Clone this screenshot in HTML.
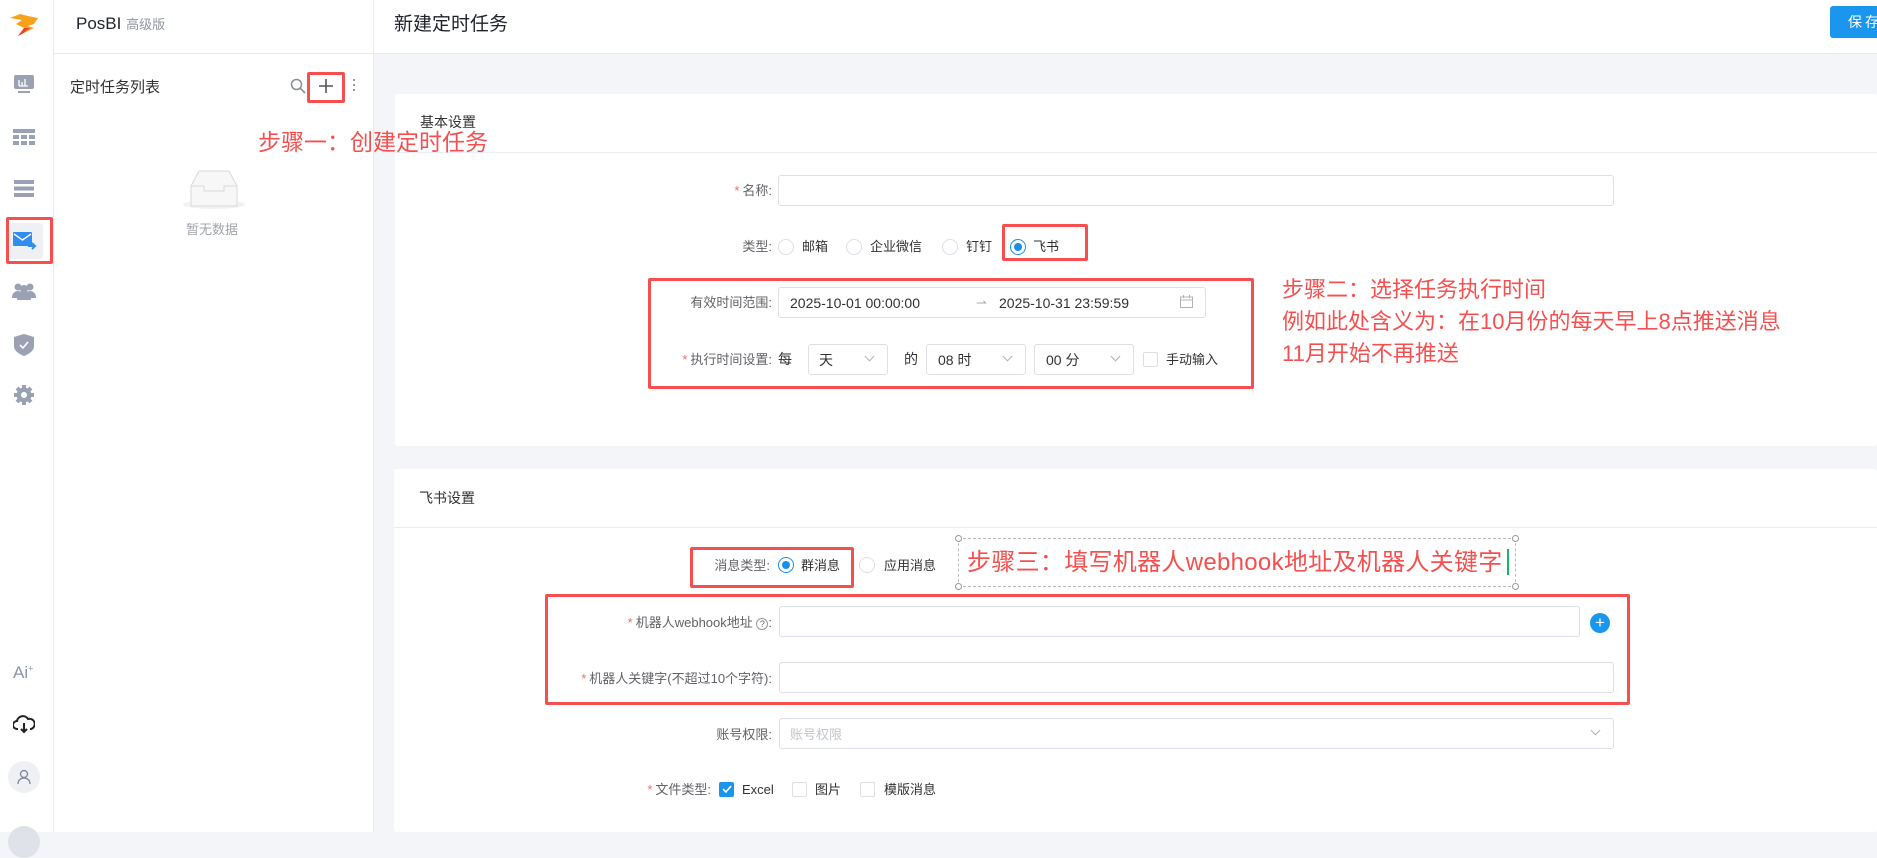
<!DOCTYPE html>
<html><head><meta charset="utf-8"><style>
*{margin:0;padding:0;box-sizing:border-box}
body{width:1877px;height:832px;overflow:hidden;position:relative;font-family:"Liberation Sans","Noto Sans CJK SC",sans-serif;background:#f3f5f8;color:#303133}
.a{position:absolute}
.lbl{position:absolute;font-size:13px;line-height:16px;color:#606266;text-align:right;white-space:nowrap}
.req{color:#f56c6c;margin-right:3px}
.inp{position:absolute;border:1px solid #dcdfe6;border-radius:3px;background:#fff}
.red{position:absolute;border:3px solid #f5504f;border-radius:2px;z-index:5}
.rt{position:absolute;color:#f5504f;white-space:nowrap;z-index:5}
.radio{position:absolute;width:16px;height:16px;border:1px solid #dcdfe6;border-radius:50%;background:#fff}
.radio.on{border-color:#1890e8}
.radio.on:after{content:"";position:absolute;left:3px;top:3px;width:8px;height:8px;border-radius:50%;background:#1890e8}
.t{position:absolute;font-size:13px;line-height:16px;color:#303133;white-space:nowrap}
.chev{position:absolute;width:7px;height:7px;border-right:1px solid #b0b3b9;border-bottom:1px solid #b0b3b9;transform:rotate(45deg)}
.cb{position:absolute;width:15px;height:15px;border:1px solid #dcdfe6;border-radius:2px;background:#fff}
</style></head><body>
<!-- sidebar -->
<div class="a" style="left:0;top:0;width:54px;height:832px;background:#fff;border-right:1px solid #e8eaee"></div>
<svg class="a" style="left:8px;top:12px" width="32" height="26" viewBox="0 0 32 26"><path d="M2 6 L12 2 L20 4 L30 6 L26 12 L20 14 L26 16 L10 24 L16 16 L8 12 L14 8 Z" fill="#f7a21b"/><path d="M10 24 L16 16 L22 16 L14 22Z" fill="#e9422e"/></svg>
<svg class="a" style="left:13px;top:74px" width="22" height="20" viewBox="0 0 22 20"><rect x="1" y="1" width="20" height="14" rx="2" fill="#9aa1b3"/><rect x="5" y="17" width="12" height="2" fill="#9aa1b3"/><path d="M6 12V6M9 12V8M12 12V5M15 12h-9" stroke="#fff" stroke-width="1.3"/></svg>
<svg class="a" style="left:13px;top:129px" width="22" height="16"><g fill="#9aa1b3"><rect x="0" y="0" width="22" height="4"/><rect x="0" y="6" width="6" height="4"/><rect x="8" y="6" width="6" height="4"/><rect x="16" y="6" width="6" height="4"/><rect x="0" y="12" width="6" height="4"/><rect x="8" y="12" width="6" height="4"/><rect x="16" y="12" width="6" height="4"/></g></svg>
<svg class="a" style="left:14px;top:180px" width="20" height="17"><g fill="#9aa1b3"><rect y="0" width="20" height="4"/><rect y="6.5" width="20" height="4"/><rect y="13" width="20" height="4"/></g></svg>
<div class="a" style="left:9px;top:223px;width:34px;height:36px;background:#eef0f4;border-radius:4px"></div>
<svg class="a" style="left:13px;top:231px" width="24" height="20"><rect x="0" y="1" width="19" height="14" rx="1" fill="#2f8df0"/><path d="M1 3 L9.5 9 L18 3" stroke="#fff" stroke-width="1.5" fill="none"/><path d="M15 15h7M19 12l3 3-3 3" stroke="#2f8df0" stroke-width="2" fill="none"/></svg>
<div class="red" style="left:6px;top:217px;width:47px;height:47px"></div>
<svg class="a" style="left:12px;top:282px" width="24" height="18"><g fill="#9aa1b3"><circle cx="6" cy="5" r="3.5"/><circle cx="18" cy="5" r="3.5"/><circle cx="12" cy="7" r="4"/><path d="M0 16c0-5 3-7 6-7s6 2 6 7z"/><path d="M12 16c0-5 3-7 6-7s6 2 6 7z"/><path d="M5 18c0-6 3-8 7-8s7 2 7 8z"/></g></svg>
<svg class="a" style="left:14px;top:334px" width="20" height="22"><path d="M10 0L20 3V12C20 17 15 20 10 22C5 20 0 17 0 12V3Z" fill="#9aa1b3"/><path d="M6 11l3 3 5-6" stroke="#fff" stroke-width="1.6" fill="none"/></svg>
<svg class="a" style="left:13px;top:384px" width="22" height="22" viewBox="0 0 22 22"><circle cx="11" cy="11" r="7.5" fill="#9aa1b3"/><g stroke="#9aa1b3" stroke-width="4"><path d="M11 1v20M1 11h20M4 4l14 14M18 4L4 18"/></g><circle cx="11" cy="11" r="3" fill="#fff"/></svg>
<div class="a" style="left:13px;top:663px;font-size:17px;color:#8a93a8">Ai<sup style="font-size:9px">+</sup></div>
<svg class="a" style="left:13px;top:714px" width="22" height="20"><path d="M5 15H4a4 4 0 0 1 0-8 6 6 0 0 1 11-2 5 5 0 0 1 3 10h-1" stroke="#222" stroke-width="2" fill="none"/><path d="M11 9v9M8 15l3 3 3-3" stroke="#222" stroke-width="2" fill="none"/></svg>
<div class="a" style="left:8px;top:761px;width:32px;height:32px;border-radius:50%;background:#eef0f4"></div>
<svg class="a" style="left:17px;top:769px" width="14" height="16"><circle cx="7" cy="5" r="3.5" stroke="#7d8497" stroke-width="1.3" fill="none"/><path d="M1 15c0-4 3-6 6-6s6 2 6 6" stroke="#7d8497" stroke-width="1.3" fill="none"/></svg>
<div class="a" style="left:8px;top:826px;width:32px;height:32px;border-radius:50%;background:#dfe2e8"></div>

<!-- middle panel -->
<div class="a" style="left:54px;top:0;width:320px;height:832px;background:#fff;border-right:1px solid #e8eaee"></div>
<div class="a" style="left:374px;top:0;width:1503px;height:53px;background:#fff"></div>
<div class="a" style="left:54px;top:53px;width:1823px;height:1px;background:#e8eaee"></div>
<div class="t" style="left:76px;top:14px;font-size:17px;line-height:20px;color:#1f2329">PosBI <span style="font-size:13px;color:#8f959e">高级版</span></div>
<div class="t" style="left:394px;top:13px;font-size:19px;line-height:24px;color:#1f2329">新建定时任务</div>
<div class="t" style="left:70px;top:79px;font-size:15px;line-height:18px">定时任务列表</div>
<svg class="a" style="left:290px;top:78px" width="16" height="16"><circle cx="6.5" cy="6.5" r="5" stroke="#8a8f99" stroke-width="1.5" fill="none"/><path d="M10 10l5 5" stroke="#8a8f99" stroke-width="1.6"/></svg>
<svg class="a" style="left:318px;top:78px" width="16" height="16"><path d="M8 1v14M1 8h14" stroke="#555" stroke-width="1.6"/></svg>
<div class="red" style="left:307px;top:72px;width:38px;height:31px"></div>
<div class="a" style="left:353px;top:79px;width:2px;height:2px;background:#999;box-shadow:0 5px #999,0 10px #999"></div>
<div class="rt" style="left:258px;top:128px;font-size:23px;line-height:28px">步骤一：创建定时任务</div>
<div class="a" style="left:183px;top:200px;width:62px;height:9px;border-radius:50%;background:#f2f2f2"></div>
<svg class="a" style="left:190px;top:170px" width="48" height="38"><path d="M1 16L9 1h30l8 15v20H1z" fill="#f7f7f7" stroke="#d9d9d9"/><path d="M1 16h13v5h20v-5h13" stroke="#d9d9d9" fill="none"/></svg>
<div class="t" style="left:186px;top:222px;color:#a0a3aa">暂无数据</div>

<!-- save -->
<div class="a" style="left:1830px;top:6px;width:60px;height:32px;background:#1b96ee;border-radius:3px;color:#fff;font-size:14px;line-height:32px;padding-left:18px;letter-spacing:3px">保存</div>

<!-- card1 -->
<div class="a" style="left:395px;top:94px;width:1482px;height:352px;background:#fff;border-radius:3px"></div>
<div class="a" style="left:395px;top:152px;width:1482px;height:1px;background:#ebeef5"></div>
<div class="t" style="left:420px;top:114px;font-size:14px">基本设置</div>
<div class="lbl" style="left:600px;width:172px;top:183px"><span class="req">*</span>名称:</div>
<div class="inp" style="left:778px;top:175px;width:836px;height:31px"></div>
<div class="lbl" style="left:600px;width:172px;top:239px">类型:</div>
<div class="radio" style="left:778px;top:239px"></div><div class="t" style="left:802px;top:239px">邮箱</div>
<div class="radio" style="left:846px;top:239px"></div><div class="t" style="left:870px;top:239px">企业微信</div>
<div class="radio" style="left:942px;top:239px"></div><div class="t" style="left:966px;top:239px">钉钉</div>
<div class="radio on" style="left:1010px;top:239px"></div><div class="t" style="left:1033px;top:239px">飞书</div>
<div class="red" style="left:1002px;top:224px;width:86px;height:37px"></div>
<div class="lbl" style="left:600px;width:172px;top:295px">有效时间范围:</div>
<div class="inp" style="left:778px;top:287px;width:428px;height:31px"></div>
<div class="t" style="left:790px;top:295px;font-size:14px">2025-10-01 00:00:00</div>
<div class="t" style="left:976px;top:295px;color:#aaa">⇀</div>
<div class="t" style="left:999px;top:295px;font-size:14px">2025-10-31 23:59:59</div>
<svg class="a" style="left:1180px;top:295px" width="13" height="13"><rect x="0.5" y="2" width="12" height="10.5" stroke="#b0b3b9" fill="none"/><path d="M0.5 5h12M3.5 0v3M9.5 0v3" stroke="#b0b3b9"/></svg>
<div class="lbl" style="left:600px;width:172px;top:352px"><span class="req">*</span>执行时间设置:</div>
<div class="t" style="left:778px;top:351px;font-size:14px">每</div>
<div class="inp" style="left:808px;top:344px;width:80px;height:31px"></div><div class="t" style="left:819px;top:352px;font-size:14px">天</div><div class="chev" style="left:866px;top:353px"></div>
<div class="t" style="left:904px;top:351px;font-size:14px">的</div>
<div class="inp" style="left:926px;top:344px;width:100px;height:31px"></div><div class="t" style="left:938px;top:352px;font-size:14px">08 时</div><div class="chev" style="left:1004px;top:353px"></div>
<div class="inp" style="left:1034px;top:344px;width:100px;height:31px"></div><div class="t" style="left:1046px;top:352px;font-size:14px">00 分</div><div class="chev" style="left:1112px;top:353px"></div>
<div class="cb" style="left:1143px;top:352px"></div><div class="t" style="left:1166px;top:352px">手动输入</div>
<div class="red" style="left:648px;top:278px;width:606px;height:111px"></div>
<div class="rt" style="left:1282px;top:274px;font-size:22px;line-height:32px">步骤二：选择任务执行时间<br>例如此处含义为：在10月份的每天早上8点推送消息<br>11月开始不再推送</div>

<!-- card2 -->
<div class="a" style="left:394px;top:469px;width:1483px;height:363px;background:#fff;border-radius:3px"></div>
<div class="a" style="left:394px;top:527px;width:1483px;height:1px;background:#ebeef5"></div>
<div class="t" style="left:419px;top:490px;font-size:14px">飞书设置</div>
<div class="lbl" style="left:600px;width:170px;top:558px">消息类型:</div>
<div class="radio on" style="left:778px;top:557px"></div><div class="t" style="left:801px;top:558px">群消息</div>
<div class="radio" style="left:859px;top:557px"></div><div class="t" style="left:884px;top:558px">应用消息</div>
<div class="red" style="left:690px;top:547px;width:164px;height:41px"></div>
<div class="a" style="left:958px;top:538px;width:558px;height:49px;border:1px dashed #bbb"></div>
<div class="a" style="left:955px;top:535px;width:7px;height:7px;border:1px solid #999;border-radius:50%;background:#fff"></div>
<div class="a" style="left:1512px;top:535px;width:7px;height:7px;border:1px solid #999;border-radius:50%;background:#fff"></div>
<div class="a" style="left:955px;top:583px;width:7px;height:7px;border:1px solid #999;border-radius:50%;background:#fff"></div>
<div class="a" style="left:1512px;top:583px;width:7px;height:7px;border:1px solid #999;border-radius:50%;background:#fff"></div>
<div class="rt" style="left:967px;top:549px;font-size:24px;line-height:28px;letter-spacing:0.3px">步骤三：填写机器人webhook地址及机器人关键字</div>
<div class="a" style="left:1507px;top:549px;width:2px;height:26px;background:#1ab56b;z-index:6"></div>
<div class="lbl" style="left:560px;width:212px;top:615px"><span class="req">*</span>机器人webhook地址 <span style="display:inline-block;width:12px;height:12px;border:1px solid #999;border-radius:50%;font-size:9px;line-height:10px;text-align:center">?</span>:</div>
<div class="inp" style="left:779px;top:606px;width:801px;height:31px"></div>
<div class="a" style="left:1590px;top:613px;width:20px;height:20px;border-radius:50%;background:#1b96ee;color:#fff;font-size:17px;line-height:19px;text-align:center">+</div>
<div class="lbl" style="left:540px;width:232px;top:671px"><span class="req">*</span>机器人关键字(不超过10个字符):</div>
<div class="inp" style="left:779px;top:662px;width:835px;height:31px"></div>
<div class="red" style="left:545px;top:594px;width:1085px;height:111px"></div>
<div class="lbl" style="left:600px;width:172px;top:727px">账号权限:</div>
<div class="inp" style="left:779px;top:718px;width:835px;height:31px"></div>
<div class="t" style="left:790px;top:727px;color:#c0c4cc">账号权限</div><div class="chev" style="left:1592px;top:727px"></div>
<div class="lbl" style="left:600px;width:111px;top:782px"><span class="req">*</span>文件类型:</div>
<div class="cb" style="left:719px;top:782px;background:#1b96ee;border-color:#1b96ee"></div>
<svg class="a" style="left:722px;top:785px" width="10" height="9"><path d="M1 4l3 3 5-6" stroke="#fff" stroke-width="1.6" fill="none"/></svg>
<div class="t" style="left:742px;top:782px">Excel</div>
<div class="cb" style="left:792px;top:782px"></div><div class="t" style="left:815px;top:782px">图片</div>
<div class="cb" style="left:860px;top:782px"></div><div class="t" style="left:884px;top:782px">模版消息</div>
</body></html>
